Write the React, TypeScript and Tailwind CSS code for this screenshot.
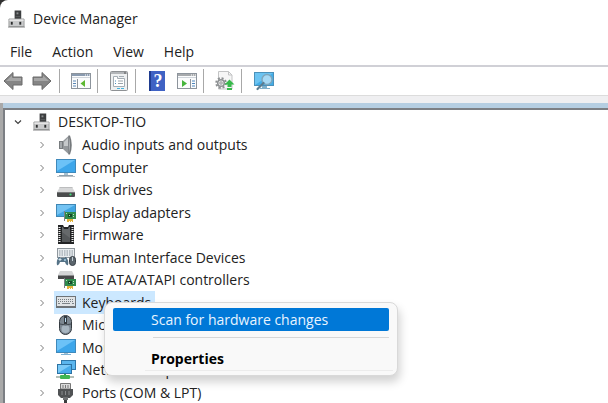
import React, { useState } from 'react'

interface Category {
    name: string
    icon: React.ReactNode
}

const ICON = 'h-5 w-5 shrink-0'

function HubIcon({ className }: { className: string }) {
    return (
        <svg viewBox="0 0 18 20" className={className}>
            <rect x="7" y="1" width="7" height="10" fill="#3d3f40" />
            <rect x="9" y="3" width="2" height="2" fill="#8b8e8f" />
            <rect x="8" y="7" width="5" height="1" fill="#5c5f60" />
            <path d="M1 10h16v8H1z" fill="#c9cacb" stroke="#9a9b9c" />
            <path d="M1.5 10.5h15v1.5h-15z" fill="#e9e9e9" />
            <rect x="3" y="13" width="2" height="3" fill="#2c2d2e" />
            <rect x="12" y="13" width="2" height="3" fill="#2c2d2e" />
            <rect x="0" y="18" width="18" height="1" fill="#858687" />
        </svg>
    )
}

function SpeakerIcon() {
    return (
        <svg viewBox="0 0 20 20" className={ICON}>
            <path d="M3 6h4v8H3z" fill="#787c7f" />
            <path d="M4 7h2v6H4z" fill="#a5a9ac" />
            <path d="M7 6l6-5.5v19L7 14z" fill="#95999c" />
            <path d="M8 7l4-4v8H8z" fill="#c6c9cb" />
            <path d="M12.500 0.500h1.500q3.500 9.500 0 19h-1.500z" fill="#75797c" />
            <path d="M13 2q2 8 0 16z" fill="#aeb2b5" />
        </svg>
    )
}

function ScreenIcon({ stand = true }: { stand?: boolean }) {
    return (
        <svg viewBox="0 0 20 20" className={ICON}>
            <rect x="0.5" y="1.5" width="19" height="13" fill="#3da6ea" stroke="#3f89bb" />
            <path d="M1 2h18L1 13z" fill="#6cc2f7" />
            <path d="M8 15h4v2H8z" fill="#a9c2d1" />
            {stand ? (
                <>
                    <path d="M3 17h14v1H3z" fill="#8fa1ad" />
                    <path d="M1 18h18v1H1z" fill="#b9c0c5" />
                </>
            ) : (
                <path d="M5 16h10v1H5z" fill="#7fb2d3" />
            )}
        </svg>
    )
}

function DiskIcon() {
    return (
        <svg viewBox="0 0 20 20" className={ICON}>
            <path d="M4 7h12l3 5H1z" fill="#d6d7d8" />
            <path d="M4 7h12l1 1H3z" fill="#bcbdbe" />
            <rect x="1" y="12" width="18" height="5" rx="1" fill="#4a4c4d" />
            <rect x="1" y="12" width="18" height="1" fill="#77797a" />
            <circle cx="14.5" cy="14.5" r="1.1" fill="#3fe07a" />
        </svg>
    )
}

function Board() {
    return (
        <g>
            <path d="M9 9h11v7H9z" fill="#2f8a4c" />
            <path d="M8 8h1v10H8z" fill="#7b8188" />
            <rect x="12" y="11" width="4" height="3" fill="#174c2b" />
            <path d="M10 10h1v1h-1zM13 12h1v1h-1zM17 11h1v1h-1zM17 13h1v1h-1z" fill="#b8e3bd" />
            <path d="M11 16h6v3h-1v-1h-1v1h-1v-1h-1v1h-2z" fill="#e2b23a" />
        </g>
    )
}

function DisplayIcon() {
    return (
        <svg viewBox="0 0 20 20" className={ICON}>
            <rect x="0.5" y="1.5" width="19" height="12" fill="#42a6e3" stroke="#4087b4" />
            <path d="M1 2h18L1 12z" fill="#73c3f3" />
            <Board />
        </svg>
    )
}

function ChipIcon() {
    return (
        <svg viewBox="0 0 20 20" className={ICON}>
            <path d="M2 0h5l1 2h4l1-2h5v19H2z" fill="#232425" />
            <path d="M6 2h1l1 2h4l1-2h1v15H6z" fill="#66696b" />
            <path d="M3.500 2v16M16.500 2v16" stroke="#ececec" strokeWidth="2" strokeDasharray="1 1" />
            <path d="M6 7l8 6v4H6z" fill="#55585a" />
        </svg>
    )
}

function InputDevicesIcon() {
    return (
        <svg viewBox="0 0 20 20" className={ICON}>
            <rect x="1.5" y="0.5" width="17" height="9" fill="#e9edf0" stroke="#8f979d" />
            <path d="M3 3h14M3 5h14M3 7h14" stroke="#87929a" strokeDasharray="1.5 1" />
            <path d="M1 17q-1-5 2-8h1v1h5V9h1q3 3 2 8-2 1-3-3H4q-1 4-3 3z" fill="#557387" />
            <path d="M4 10v3M2.5 11.500h3" stroke="#d5e2ea" />
            <circle cx="9" cy="12" r="1" fill="#a8cce1" />
            <rect x="13.5" y="8.500" width="6" height="9" rx="3" fill="#5b656d" stroke="#384047" />
            <path d="M16.500 9v4" stroke="#c3d0d8" />
        </svg>
    )
}

function ControllerIcon() {
    return (
        <svg viewBox="0 0 20 20" className={ICON}>
            <path d="M4 1h12l2 4H2z" fill="#d4d5d6" />
            <rect x="2" y="5" width="16" height="4" fill="#48494a" />
            <rect x="2" y="5" width="16" height="1" fill="#8f9091" />
            <Board />
        </svg>
    )
}

function KeyboardIcon() {
    return (
        <svg viewBox="0 0 20 20" className={ICON}>
            <rect x="0" y="3" width="20" height="12" fill="#6e7377" />
            <rect x="1" y="4" width="18" height="9" fill="#e0e3e5" />
            <path d="M2 6.500h16M2 8.500h16" stroke="#767d82" strokeDasharray="1 1" />
            <path d="M2 10.500h2M6 10.500h8M16 10.500h2" stroke="#7d8489" />
        </svg>
    )
}

function MouseIcon() {
    return (
        <svg viewBox="0 0 20 20" className={ICON}>
            <rect x="3.5" y="0.5" width="12" height="19" rx="6" fill="#7c8791" stroke="#343a40" />
            <rect x="5.500" y="10" width="8" height="8" rx="4" fill="#a7b5c0" />
            <path d="M4 9q5.500 2 11 0" fill="none" stroke="#424a51" />
            <path d="M8 1h3v8H8z" fill="#343a40" />
            <rect x="9" y="3" width="1" height="4" fill="#b9dcf2" />
        </svg>
    )
}

function NetworkIcon() {
    return (
        <svg viewBox="0 0 20 20" className={ICON}>
            <rect x="5.5" y="0.5" width="14" height="9" fill="#5bb6ee" stroke="#2f78aa" />
            <rect x="1.5" y="4.5" width="14" height="9" fill="#48aceb" stroke="#2c73a4" />
            <path d="M2 5h13L2 13z" fill="#7bcaf8" />
            <path d="M8 14h2v2H8z" fill="#38a048" />
            <path d="M0 17h18" stroke="#b5c0b8" strokeWidth="2" />
            <rect x="4" y="15" width="10" height="4" rx="1" fill="#40b653" />
        </svg>
    )
}

function PortIcon() {
    return (
        <svg viewBox="0 0 20 20" className={ICON}>
            <path d="M4.5 0.500h10V6h-10z" fill="#dadada" stroke="#777" />
            <path d="M7 2v3M9.500 2v3M12 2v3" stroke="#777" />
            <path d="M2 6h15v6l-3 3H5l-3-3z" fill="#505254" />
            <path d="M6 8v4M9.500 8v4M13 8v4" stroke="#898b8d" />
            <rect x="7" y="14" width="5" height="3" fill="#6f7173" />
            <rect x="8" y="17" width="3" height="3" fill="#3b3c3d" />
        </svg>
    )
}

function ArrowIcon({ flip = false }: { flip?: boolean }) {
    return (
        <svg viewBox="0 0 20 20" className={flip ? 'h-5 w-5 -scale-x-100' : 'h-5 w-5'}>
            <path d="M1 10l9-8.500V6h9v8h-9v4.500z" fill="#858585" stroke="#6a6a6a" strokeLinejoin="round" />
            <path d="M3 10l6-5.500V7h9v3z" fill="#a6a6a6" />
        </svg>
    )
}

function PaneIcon({ play = false }: { play?: boolean }) {
    return (
        <svg viewBox="0 0 20 20" className="h-5 w-5">
            <rect x="0.5" y="2.500" width="19" height="15" fill="#fbfcfd" stroke="#8d949c" />
            <rect x="1" y="3" width="18" height="2" fill={play ? '#a7aaad' : '#8a9bb0'} />
            <path d="M14 4h1M16 4h1M18 4h1" stroke="#fff" />
            <path d="M1 6h18v1H1z" fill="#d0d5db" />
            {play ? (
                <>
                    <path d="M5 9l5 3.500L5 16z" fill="#46b53c" />
                    <path d="M13.500 8v9" stroke="#8d949c" />
                    <path d="M15 10h3M15 12.500h3M15 15h3" stroke="#4d86bd" />
                </>
            ) : (
                <>
                    <path d="M6.500 8v9" stroke="#8d949c" />
                    <path d="M2 10h3M2 12.500h3M2 15h3" stroke="#5b87b5" />
                    <path d="M14 9l-4.500 3.500L14 16z" fill="#5db832" />
                </>
            )}
        </svg>
    )
}

function PropertiesIcon() {
    return (
        <svg viewBox="0 0 20 20" className="h-5 w-5">
            <rect x="1.5" y="0.5" width="17" height="19" rx="1" fill="#eef0f1" stroke="#8e9194" />
            <rect x="2" y="1" width="16" height="2" fill="#b3b6b9" />
            <path d="M15 2h2" stroke="#555" />
            <path d="M4.500 5.500h4v2h7v8h-11z" fill="#fff" stroke="#a4adb4" />
            <path d="M10 5.500h5" stroke="#a4adb4" />
            <path d="M6 10h1M6 12.500h1" stroke="#4e8fc0" />
            <path d="M9 10h5M9 12.500h5" stroke="#9aa3aa" />
            <path d="M8 17.500h3M12 17.500h3" stroke="#45b4df" />
        </svg>
    )
}

function HelpIcon() {
    return (
        <span className="flex h-5 w-4 items-center justify-center border-l-2 border-[#1f3c90] bg-[#3f62c4] font-['Liberation_Serif',serif] text-lg leading-5 font-bold text-white">
            ?
        </span>
    )
}

function UpdateIcon() {
    return (
        <svg viewBox="0 0 20 20" className="h-5 w-5">
            <path d="M3.500 0.500h10l3.500 3.500v14H3.500z" fill="#f6f6f6" stroke="#c3c4c5" />
            <path d="M13.500 0.500V4H17" fill="none" stroke="#c3c4c5" />
            <circle cx="6" cy="12" r="4.800" fill="none" stroke="#8d9092" strokeWidth="2" strokeDasharray="2 1.770" />
            <circle cx="6" cy="12" r="3.300" fill="#e8e8e8" stroke="#8d9092" strokeWidth="1.500" />
            <circle cx="6" cy="12" r="1.200" fill="#fff" stroke="#8d9092" />
            <path d="M14.500 8.500l5 5h-3V16h-4v-2.500h-3z" fill="#37b84a" />
            <path d="M12 17h5v2h-5z" fill="#37b84a" />
        </svg>
    )
}

function ScanIcon() {
    return (
        <svg viewBox="0 0 22 20" className="h-5 w-[22px]">
            <rect x="1.5" y="1.5" width="19" height="13" fill="#42ade8" stroke="#4b91ba" />
            <path d="M2 2h18L2 14z" fill="#6cc4f2" />
            <path d="M9 15h5v2H9zM7 17h10v1H7z" fill="#7fb0cb" />
            <circle cx="14" cy="8.500" r="5" fill="#a6d9f5" stroke="#7ea6bc" strokeWidth="1.400" />
            <path d="M10.500 12L4.500 18" stroke="#5c7d91" strokeWidth="2.200" strokeLinecap="round" />
        </svg>
    )
}

const categories: Category[] = [
    { name: 'Audio inputs and outputs', icon: <SpeakerIcon /> },
    { name: 'Computer', icon: <ScreenIcon /> },
    { name: 'Disk drives', icon: <DiskIcon /> },
    { name: 'Display adapters', icon: <DisplayIcon /> },
    { name: 'Firmware', icon: <ChipIcon /> },
    { name: 'Human Interface Devices', icon: <InputDevicesIcon /> },
    { name: 'IDE ATA/ATAPI controllers', icon: <ControllerIcon /> },
    { name: 'Keyboards', icon: <KeyboardIcon /> },
    { name: 'Mice and other pointing devices', icon: <MouseIcon /> },
    { name: 'Monitors', icon: <ScreenIcon stand={false} /> },
    { name: 'Network adapters', icon: <NetworkIcon /> },
    { name: 'Ports (COM & LPT)', icon: <PortIcon /> },
]

function Chevron({ open = false }: { open?: boolean }) {
    return (
        <svg viewBox="0 0 8 8" className="h-2 w-2 shrink-0" fill="none">
            {open ? (
                <path d="M1 2.500l3 3 3-3" stroke="#404040" strokeWidth="1.200" />
            ) : (
                <path d="M2.500 1l3 3-3 3" stroke="#7c7c7c" />
            )}
        </svg>
    )
}

function ToolButton({ label, children }: { label: string; children: React.ReactNode }) {
    return (
        <button aria-label={label} className="flex shrink-0 items-center justify-center">
            {children}
        </button>
    )
}

function Divider() {
    return <span className="h-6 w-px shrink-0 bg-[#a8a8a8]" />
}

function ContextMenu() {
    return (
        <div
            role="menu"
            className="absolute top-[11px] left-[50px] z-10 flex w-[294px] flex-col rounded-lg border border-[#d9d9d9] bg-[#f9f9f9] px-2 pt-[5px] pb-1 shadow-[2px_6px_10px_rgba(0,0,0,0.18)]"
        >
            <button role="menuitem" className="h-[23px] rounded-xs bg-[#0078d7] pl-[38px] text-left text-[#e8f4ff]">
                Scan for hardware changes
            </button>
            <hr className="mt-1.5 ml-10 border-[#d7d7d7]" />
            <button role="menuitem" className="mt-2.5 h-[22px] pl-[38px] text-left font-bold text-black">
                Properties
            </button>
            <hr className="-mr-1 ml-8 border-[#ececec]" />
        </div>
    )
}

export default function App() {
    const [selected, setSelected] = useState('Keyboards')

    return (
        <div className="h-screen overflow-hidden bg-[#303030] font-['Open_Sans','Noto_Sans',sans-serif] text-sm whitespace-nowrap text-[#222]">
            <div className="flex h-full flex-col rounded-tl-lg bg-white">
                <header className="flex h-[38px] shrink-0 items-center gap-2 pl-2">
                    <HubIcon className="h-5 w-[17px]" />
                    <h1>Device Manager</h1>
                </header>

                <nav className="flex h-[27px] shrink-0 items-center gap-5 pl-2.5">
                    <button>File</button>
                    <button>Action</button>
                    <button>View</button>
                    <button>Help</button>
                </nav>

                <div className="flex h-[31px] shrink-0 items-center border-y border-t-2 border-t-[#d0d0d6] border-b-[#dcdcdc] pl-[3px]">
                    <div className="flex gap-[9px] pr-[7px]">
                        <ToolButton label="Back"><ArrowIcon /></ToolButton>
                        <ToolButton label="Forward"><ArrowIcon flip /></ToolButton>
                    </div>
                    <Divider />
                    <div className="flex pr-1.5 pl-[11px]">
                        <ToolButton label="Show console tree"><PaneIcon /></ToolButton>
                    </div>
                    <Divider />
                    <div className="flex pr-1.5 pl-[11px]">
                        <ToolButton label="Properties"><PropertiesIcon /></ToolButton>
                    </div>
                    <Divider />
                    <div className="flex gap-3 pr-1.5 pl-[13px]">
                        <ToolButton label="Help"><HelpIcon /></ToolButton>
                        <ToolButton label="Show action pane"><PaneIcon play /></ToolButton>
                    </div>
                    <Divider />
                    <div className="flex pr-1.5 pl-[11px]">
                        <ToolButton label="Update driver"><UpdateIcon /></ToolButton>
                    </div>
                    <Divider />
                    <div className="flex pl-[11px]">
                        <ToolButton label="Scan for hardware changes"><ScanIcon /></ToolButton>
                    </div>
                </div>

                <div className="h-[7px] shrink-0 bg-[#efeff1]" />

                <div className="flex min-h-0 flex-1 flex-col border-l-[3px] border-[#a9a9a9]">
                    <div className="h-[5px] shrink-0 bg-[#b5cee2]" />
                    <main className="min-h-0 flex-1 border-t-2 border-l-2 border-[#7c7f84] bg-white">
                        <ul role="tree" aria-label="Devices">
                            <li role="treeitem" aria-expanded="true">
                                <button className="flex h-6 items-center pl-[9px]">
                                    <Chevron open />
                                    <HubIcon className="ml-[11px] h-5 w-[17px]" />
                                    <span className="ml-2">DESKTOP-TIO</span>
                                </button>
                                <ul role="group">
                                    {categories.map((item) => (
                                        <li
                                            key={item.name}
                                            role="treeitem"
                                            aria-selected={item.name === selected}
                                            className="flex items-center pl-[33px] odd:h-[22px] even:h-[23px]"
                                        >
                                            <Chevron />
                                            <div className="relative ml-2 h-full">
                                                <button
                                                    onClick={() => setSelected(item.name)}
                                                    className={
                                                        item.name === selected
                                                            ? 'flex h-full items-center gap-1.5 bg-[#cce8ff] pr-1 pl-0.5'
                                                            : 'flex h-full items-center gap-1.5 pr-1 pl-0.5'
                                                    }
                                                >
                                                    {item.icon}
                                                    <span>{item.name}</span>
                                                </button>
                                                {item.name === selected && <ContextMenu />}
                                            </div>
                                        </li>
                                    ))}
                                </ul>
                            </li>
                        </ul>
                    </main>
                </div>
            </div>
        </div>
    )
}
